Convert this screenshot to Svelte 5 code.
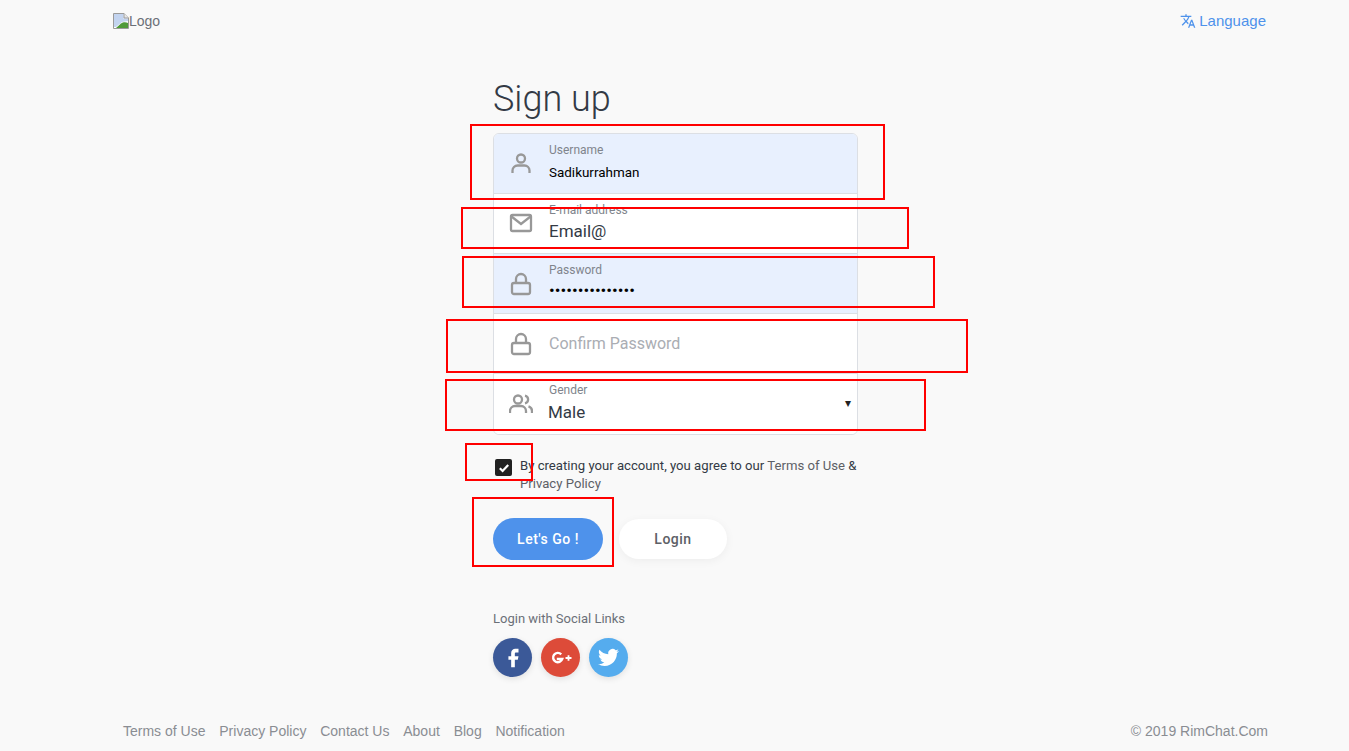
<script lang="ts">
	const redBoxes = [
		{ x: 470, y: 124, w: 415, h: 76 },
		{ x: 461, y: 207, w: 448, h: 42 },
		{ x: 462, y: 256, w: 473, h: 52 },
		{ x: 446, y: 319, w: 522, h: 54 },
		{ x: 445, y: 379, w: 481, h: 52 },
		{ x: 465, y: 443, w: 68, h: 38 },
		{ x: 472, y: 497, w: 142, h: 70 }
	];
	const footerLinks = ['Terms of Use', 'Privacy Policy', 'Contact Us', 'About', 'Blog', 'Notification'];
	let gender = $state('Male');
	let agreed = $state(true);
</script>

<div class="page">
	<header class="topbar">
		<a class="logo" href="#top">
			<svg class="broken" width="16" height="16" viewBox="0 0 16 16">
				<path d="M0.500 0.500H11L15.500 5V15.500H0.500Z" fill="#fff" stroke="#9a9a9a" />
				<path d="M1 1H10.500V5.500H15V8L9 9L3 14H1Z" fill="#c3d4f0" />
				<path d="M11 0.500V5H15.500" fill="#e8e8e8" stroke="#9a9a9a" />
				<path d="M3 15L8 10.500C10 9 13 9 15 10V15Z" fill="#4f9a3a" />
			</svg>Logo
		</a>
		<a class="lang" href="#top">
			<svg width="16" height="16" viewBox="0 0 24 24" fill="currentColor">
				<path
					d="M12.87 15.07l-2.54-2.51.03-.03c1.74-1.94 2.98-4.17 3.71-6.53H17V4h-7V2H8v2H1v1.99h11.17C11.5 7.92 10.44 9.75 9 11.35 8.07 10.32 7.3 9.19 6.69 8h-2c.73 1.63 1.73 3.17 2.98 4.56l-5.09 5.02L4 19l5-5 3.11 3.11.76-2.04zM18.5 10h-2L12 22h2l1.12-3h4.75L21 22h2l-4.5-12zm-2.62 7l1.62-4.33L19.12 17h-3.24z"
				/>
			</svg>
			<span>Language</span>
		</a>
	</header>

	<main class="signup">
		<h1>Sign up</h1>
		<div class="fields">
			<div class="field filled">
				<svg class="ico user" width="24" height="24" viewBox="0 0 24 24">
					<circle cx="12" cy="7.500" r="4" />
					<path d="M3.500 22v-2.500a5 5 0 0 1 5-5h7a5 5 0 0 1 5 5V22" />
				</svg>
				<div class="body">
					<label for="username">Username</label>
					<input id="username" class="auto" value="Sadikurrahman" readonly />
				</div>
			</div>
			<div class="field">
				<svg class="ico mail" width="24" height="24" viewBox="0 0 24 24">
					<rect x="2" y="4" width="20" height="16" rx="1.500" />
					<path d="M2.500 5.500 12 13l9.500-7.500" />
				</svg>
				<div class="body">
					<label for="email">E-mail address</label>
					<input id="email" value="Email@" readonly />
				</div>
			</div>
			<div class="field filled">
				<svg class="ico" width="24" height="24" viewBox="0 0 24 24">
					<rect x="3" y="11" width="18" height="11" rx="2" />
					<path d="M7 11V7a5 5 0 0 1 10 0v4" />
				</svg>
				<div class="body">
					<label for="password">Password</label>
					<input id="password" class="auto dots" type="password" value="Sadikurrahman12" readonly />
				</div>
			</div>
			<div class="field">
				<svg class="ico" width="24" height="24" viewBox="0 0 24 24">
					<rect x="3" y="11" width="18" height="11" rx="2" />
					<path d="M7 11V7a5 5 0 0 1 10 0v4" />
				</svg>
				<div class="body only">
					<input id="confirm" type="password" placeholder="Confirm Password" />
				</div>
			</div>
			<div class="field last">
				<svg class="ico" width="24" height="24" viewBox="0 0 24 24">
					<circle cx="9" cy="7.500" r="4" />
					<path d="M1 21v-2a5 5 0 0 1 5-5h6a5 5 0 0 1 5 5v2" />
					<path d="M16 3.600a4 4 0 0 1 0 7.800" />
					<path d="M23 21v-2a5 5 0 0 0-3.500-4.700" />
				</svg>
				<div class="body">
					<label for="gender">Gender</label>
					<select id="gender" bind:value={gender}>
						<option>Male</option>
						<option>Female</option>
					</select>
				</div>
				<span class="caret">▾</span>
			</div>
		</div>

		<div class="terms">
			<button class="check" class:on={agreed} aria-label="Agree" onclick={() => (agreed = !agreed)}>
				<svg width="12" height="12" viewBox="0 0 12 12">
					<path d="M1.800 6.300 4.600 9l5.600-6" />
				</svg>
			</button>
			<p>
				By creating your account, you agree to our <a href="#top">Terms of Use</a> &amp;
				<a href="#top">Privacy Policy</a>
			</p>
		</div>

		<div class="actions">
			<button class="btn primary">Let's Go !</button>
			<button class="btn plain">Login</button>
		</div>

		<p class="social-title">Login with Social Links</p>
		<div class="social">
			<a class="fb" href="#top" aria-label="Facebook">
				<svg width="22" height="22" viewBox="0 0 24 24" fill="#fff">
					<path d="M18 2h-3.500a4.500 4.500 0 0 0-4.500 4.500V10H7v4h3v8h4v-8h3.200l.8-4h-4V7a1 1 0 0 1 1-1h3z" />
				</svg>
			</a>
			<a class="gp" href="#top" aria-label="Google Plus">
				<svg width="24" height="24" viewBox="0 0 24 24" fill="none" stroke="#fff" stroke-width="2.400">
					<path d="M12.200 8.300A4.700 4.700 0 1 0 13.300 13H7.800" />
					<path d="M16.500 12h6M19.500 9.200v5.600" stroke-width="1.800" />
				</svg>
			</a>
			<a class="tw" href="#top" aria-label="Twitter">
				<svg width="21" height="21" viewBox="0 0 24 24" fill="#fff">
					<path
						d="M23.953 4.570a10 10 0 01-2.825.775 4.958 4.958 0 002.163-2.723c-.951.555-2.005.959-3.127 1.184a4.920 4.920 0 00-8.384 4.482C7.690 8.095 4.067 6.130 1.640 3.162a4.822 4.822 0 00-.666 2.475c0 1.710.870 3.213 2.188 4.096a4.904 4.904 0 01-2.228-.616v.060a4.923 4.923 0 003.946 4.827 4.996 4.996 0 01-2.212.085 4.936 4.936 0 004.604 3.417 9.867 9.867 0 01-6.102 2.105c-.390 0-.779-.023-1.170-.067a13.995 13.995 0 007.557 2.209c9.053 0 13.998-7.496 13.998-13.985 0-.210 0-.420-.015-.630A9.935 9.935 0 0024 4.590z"
					/>
				</svg>
			</a>
		</div>
	</main>

	<footer class="foot">
		<nav>
			{#each footerLinks as link}
				<a href="#top">{link}</a>
			{/each}
		</nav>
		<span>© 2019 RimChat.Com</span>
	</footer>

	{#each redBoxes as box}
		<div class="mark" style="left:{box.x}px;top:{box.y}px;width:{box.w}px;height:{box.h}px"></div>
	{/each}
</div>

<style>
	:global(body) {
		margin: 0;
		background: #f9f9f9;
		font-family: Roboto, 'Liberation Sans', sans-serif;
		color: #3d4450;
	}

	a {
		color: inherit;
		text-decoration: none;
	}

	.page {
		position: relative;
		height: 751px;
		overflow: hidden;
		display: flex;
		flex-direction: column;
	}

	.topbar {
		display: flex;
		justify-content: space-between;
		align-items: center;
		height: 42px;
		padding: 0 83px 0 113px;
		font-family: 'Liberation Sans', sans-serif;
	}

	.logo {
		display: flex;
		align-items: center;
		font-size: 14px;
		color: #6b7078;
	}

	.lang {
		display: flex;
		align-items: center;
		gap: 3px;
		font-size: 15px;
		color: #4e92eb;
	}

	.lang span {
		margin-bottom: 2px;
	}

	.signup {
		width: 365px;
		margin-left: 493px;
		flex: 1;
	}

	h1 {
		margin: 34px 0 11px;
		font-size: 36px;
		line-height: 46px;
		font-weight: 300;
		color: #333a45;
	}

	.fields {
		border: 1px solid #dcdfe4;
		border-radius: 6px;
		overflow: hidden;
		background: #fff;
	}

	.field {
		position: relative;
		display: flex;
		align-items: center;
		height: 59px;
		padding: 0 0 0 15px;
		border-bottom: 1px solid #dcdfe4;
		background: #fff;
	}

	.field.filled {
		background: #e8f0fe;
	}

	.field.last {
		border-bottom: 0;
		height: 60px;
	}

	.ico {
		flex: none;
		fill: none;
		stroke: #989898;
		stroke-width: 2.300;
	}

	.ico.user {
		margin-top: -2px;
	}

	.ico.mail {
		margin-top: -2px;
	}

	.body {
		flex: 1;
		margin-left: 16px;
		display: flex;
		flex-direction: column;
		height: 100%;
		box-sizing: border-box;
		padding-top: 9px;
	}

	.body.only {
		padding-top: 0;
		justify-content: center;
	}

	.only input {
		margin-top: 1px;
	}

	label {
		font-size: 12px;
		line-height: 14px;
		color: #80848c;
	}

	input {
		border: 0;
		outline: 0;
		padding: 0;
		background: transparent;
		font: inherit;
		font-size: 16px;
		line-height: 24px;
		height: 24px;
		margin-top: 3px;
		color: #333a45;
		width: 100%;
	}

	#email {
		font-size: 17px;
		margin-top: 2px;
	}

	input.auto {
		font-size: 13.450px;
		color: #000;
		margin-top: 4px;
	}

	input.dots {
		font-size: 17px;
		margin-top: 1px;
	}

	input::placeholder {
		color: #aaadb3;
		opacity: 1;
	}

	select {
		appearance: none;
		border: 0;
		outline: 0;
		padding: 0;
		margin: 3px 0 0 -1px;
		background: transparent;
		font: inherit;
		font-size: 17px;
		line-height: 24px;
		height: 24px;
		color: #333a45;
	}

	.caret {
		position: absolute;
		right: 6px;
		top: 22px;
		font-size: 12px;
		color: #222;
	}

	.terms {
		display: flex;
		margin-top: 22px;
		gap: 8px;
		padding-left: 2px;
	}

	.check {
		flex: none;
		width: 17px;
		height: 17px;
		margin-top: 2px;
		padding: 0;
		border: 0;
		border-radius: 2px;
		background: #fff;
		display: flex;
		align-items: center;
		justify-content: center;
	}

	.check svg {
		fill: none;
		stroke: #fff;
		stroke-width: 2.200;
	}

	.check.on {
		background: #212121;
	}

	.terms p {
		margin: 0;
		font-size: 13.150px;
		line-height: 18px;
		color: #333a45;
	}

	.terms p a {
		color: #5d6066;
	}

	.actions {
		display: flex;
		align-items: center;
		gap: 16px;
		margin-top: 25px;
	}

	.btn {
		border: 0;
		border-radius: 21px;
		font: inherit;
		font-size: 14px;
		font-weight: 500;
		letter-spacing: 0.5px;
	}

	.primary {
		width: 110px;
		height: 42px;
		background: #4e92eb;
		color: #fff;
	}

	.plain {
		width: 108px;
		height: 40px;
		background: #fff;
		color: #5d6066;
		box-shadow: 0 2px 10px rgba(0, 0, 0, 0.05);
	}

	.social-title {
		margin: 50px 0 0;
		font-size: 13px;
		line-height: 18px;
		color: #6b7078;
	}

	.social {
		display: flex;
		gap: 9px;
		margin-top: 10px;
	}

	.social a {
		width: 39px;
		height: 39px;
		border-radius: 50%;
		display: flex;
		align-items: center;
		justify-content: center;
		box-shadow: 0 2px 6px rgba(0, 0, 0, 0.1);
	}

	.fb {
		background: #3b5998;
	}

	.gp {
		background: #dd4b39;
	}

	.tw {
		background: #55acee;
	}

	.foot {
		display: flex;
		justify-content: space-between;
		align-items: center;
		height: 40px;
		padding: 0 81px 0 123px;
		font-family: 'Liberation Sans', sans-serif;
		font-size: 14px;
		color: #8a8d93;
	}

	.foot nav {
		display: flex;
		gap: 13.800px;
	}

	.mark {
		position: absolute;
		border: 2px solid #f00;
		box-sizing: border-box;
		pointer-events: none;
	}
</style>
